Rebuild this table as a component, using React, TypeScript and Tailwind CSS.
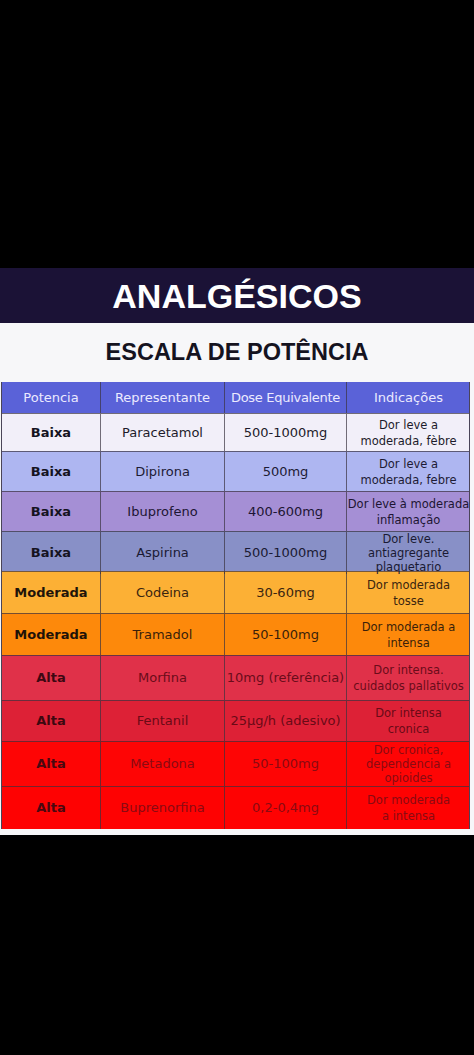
import type { ReactNode } from "react";

type Row = {
  level: string;
  drug: string;
  dose: string;
  info: string[];
  h: string;
  bg: string;
  text: string;
  strong: string;
};

const rows: Row[] = [
  { level: "Baixa", drug: "Paracetamol", dose: "500-1000mg", info: ["Dor leve a", "moderada, fèbre"], h: "h-[38px]", bg: "bg-[#f2eff9]", text: "text-[#1d1b2b]", strong: "text-[#15131f]" },
  { level: "Baixa", drug: "Dipirona", dose: "500mg", info: ["Dor leve a", "moderada, febre"], h: "h-[40px]", bg: "bg-[#aeb6f1]", text: "text-[#1d1b35]", strong: "text-[#15131f]" },
  { level: "Baixa", drug: "Ibuprofeno", dose: "400-600mg", info: ["Dor leve à moderada", "inflamação"], h: "h-[40px]", bg: "bg-[#a58fd5]", text: "text-[#1d1533]", strong: "text-[#15131f]" },
  { level: "Baixa", drug: "Aspirina", dose: "500-1000mg", info: ["Dor leve.", "antiagregante", "plaquetario"], h: "h-[40px]", bg: "bg-[#8890c7]", text: "text-[#1a1a33]", strong: "text-[#15131f]" },
  { level: "Moderada", drug: "Codeina", dose: "30-60mg", info: ["Dor moderada", "tosse"], h: "h-[42px]", bg: "bg-[#fcb035]", text: "text-[#3a2510]", strong: "text-[#1f140a]" },
  { level: "Moderada", drug: "Tramadol", dose: "50-100mg", info: ["Dor moderada a", "intensa"], h: "h-[42px]", bg: "bg-[#fd890b]", text: "text-[#3a1f0a]", strong: "text-[#1f1208]" },
  { level: "Alta", drug: "Morfina", dose: "10mg (referência)", info: ["Dor intensa.", "cuidados pallativos"], h: "h-[45px]", bg: "bg-[#e03149]", text: "text-[#6a0c1a]", strong: "text-[#3d0812]" },
  { level: "Alta", drug: "Fentanil", dose: "25µg/h (adesivo)", info: ["Dor intensa", "cronica"], h: "h-[41px]", bg: "bg-[#dd2136]", text: "text-[#6a0a16]", strong: "text-[#3d0810]" },
  { level: "Alta", drug: "Metadona", dose: "50-100mg", info: ["Dor cronica,", "dependencia a", "opioides"], h: "h-[45px]", bg: "bg-[#fe0505]", text: "text-[#8a0a12]", strong: "text-[#4a0810]" },
  { level: "Alta", drug: "Buprenorfina", dose: "0,2-0,4mg", info: ["Dor moderada", "a intensa"], h: "h-[43px]", bg: "bg-[#fe0202]", text: "text-[#8a0a12]", strong: "text-[#4a0810]" },
];

const cols = "grid grid-cols-[99px_124px_122px_123px]";

function Cell({ children, last, className = "" }: { children: ReactNode; last?: boolean; className?: string }) {
  return (
    <div className={`flex items-center justify-center text-center ${last ? "" : "border-r border-[#3b3340]/70"} ${className}`}>
      {children}
    </div>
  );
}

export default function App() {
  return (
    <div className="flex h-[1055px] w-[474px] flex-col bg-black font-['DejaVu_Sans',sans-serif]">
      <div className="h-[268px]" />
      <div className="flex h-[55px] items-center justify-center bg-[#1b1236]">
        <h1 className="font-['Liberation_Sans',Arial,sans-serif] text-[34px] font-bold leading-none text-white">ANALGÉSICOS</h1>
      </div>
      <div className="flex flex-col bg-[#f7f7f9] pb-[6px]">
        <div className="flex h-[59px] items-center justify-center">
          <h2 className="font-['Liberation_Sans',Arial,sans-serif] text-[23.5px] font-bold leading-none text-[#15131f]">ESCALA DE POTÊNCIA</h2>
        </div>
        <div className="ml-[1px] mr-[4px] border-x-[1px] border-[#4a4458]">
          <div className={`${cols} h-[31px] bg-[#5a62d8] text-[13px] text-[#eceaff]`}>
            <Cell>Potencia</Cell>
            <Cell>Representante</Cell>
            <Cell className="tracking-[-0.3px]">Dose Equivalente</Cell>
            <Cell last>Indicações</Cell>
          </div>
          {rows.map((r) => (
            <div key={r.drug} className={`${cols} ${r.h} ${r.bg} border-t border-[#3b3340]/70`}>
              <Cell className={`text-[13px] font-bold ${r.strong}`}>{r.level}</Cell>
              <Cell className={`text-[13px] ${r.text}`}>{r.drug}</Cell>
              <Cell className={`whitespace-nowrap text-[13px] ${r.text}`}>{r.dose}</Cell>
              <Cell last className={`text-[11.5px] ${r.info.length > 2 ? "leading-[14px]" : "leading-[16px]"} ${r.text}`}>
                <div className="flex flex-col">
                  {r.info.map((l) => (
                    <span key={l} className="whitespace-nowrap">{l}</span>
                  ))}
                </div>
              </Cell>
            </div>
          ))}
        </div>
      </div>
      <div className="flex-1" />
    </div>
  );
}
